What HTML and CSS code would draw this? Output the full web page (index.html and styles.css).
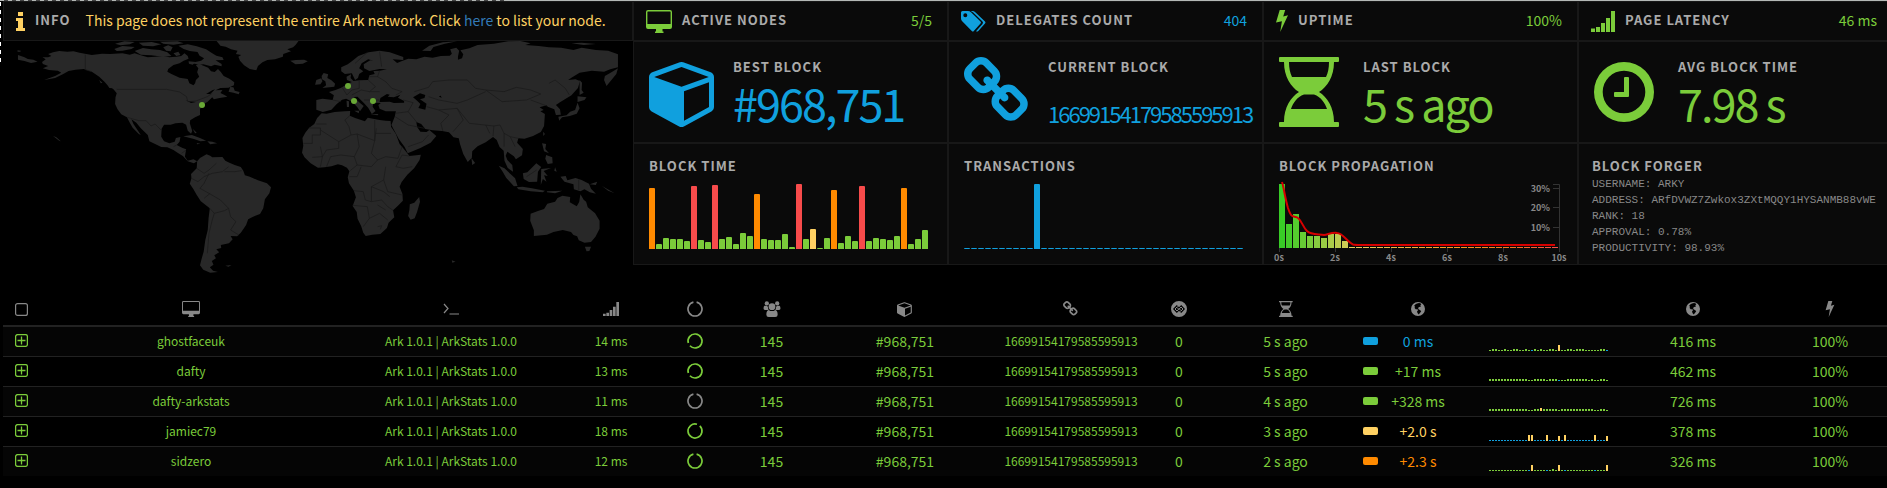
FILE: index.html
```html
<!DOCTYPE html>
<html lang="en">
<head>
<meta charset="utf-8">
<title>Ark Network Stats</title>
<link rel="stylesheet" href="styles.css">
</head>
<body>
<svg class="defs" aria-hidden="true">
  <symbol id="desktop" viewBox="0 0 26 23"><path fill-rule="evenodd" d="M2 0H24Q26 0 26 2V17Q26 19 24 19H16.5V21.5H17.5V23H9V21.5H10V19H2Q0 19 0 17V2Q0 0 2 0ZM2 1.5Q1.4 1.5 1.4 2V14H24.6V2Q24.6 1.5 24 1.5Z"/></symbol>
  <symbol id="tags" viewBox="0 0 25 21"><path fill-rule="evenodd" d="M1.5 0H7Q8.600 0 10 1.300L19.500 10.500Q20.500 11.500 19.500 12.500L12.800 20Q11.900 21 10.800 20L1.200 10.300Q0 9 0 7.500V1.500Q0 0 1.500 0ZM4.300 2.300A2 2 0 1 0 4.300 6.300A2 2 0 1 0 4.300 2.300Z"/><path d="M9.800 0H11.300Q13 0 14.300 1.300L24 10.500Q25 11.500 24 12.500L17.300 20Q16.200 21 15 20.200L21.500 12.900Q22.500 11.600 21.500 10.600L12.200 1.600Q11 .5 9.800 0Z"/></symbol>
  <symbol id="bolt" viewBox="0 0 12 22"><path d="M3.700 0H9.200L7.200 6.400L12 5.300L4.200 22L5.900 11.200L0 12.600Z"/></symbol>
  <symbol id="signal" viewBox="0 0 24 21"><path d="M0 17.500H4V21H0ZM5 16H9V21H5ZM10 12H14V21H10ZM15 7H19V21H15ZM20 0H24V21H20Z"/></symbol>
  <symbol id="info" viewBox="0 0 9 19"><path d="M2 0H7V4H2ZM0 6H7V16H9V19H0V16H2V9H0Z"/></symbol>
  <symbol id="cube" viewBox="0 0 1664 1792" preserveAspectRatio="xMinYMid"><path d="M896 1629l640-349v-636l-640 233v752zm-64-865l698-254-698-254-698 254zm832-252v768q0 35-18 65t-49 47l-704 384q-28 16-61 16t-61-16l-704-384q-31-17-49-47t-18-65v-768q0-40 23-73t61-47l704-256q22-8 44-8t44 8l704 256q38 14 61 47t23 73z"/></symbol>
  <symbol id="chain" viewBox="16 16 1632 1792" preserveAspectRatio="xMinYMid"><path d="M1456 1216q0-40-28-68l-208-208q-28-28-68-28-42 0-72 32 3 3 19 18.500t21.500 21.500 15 19 13 25.500 3.500 27.500q0 40-28 68t-68 28q-15 0-27.500-3.500t-25.500-13-19-15-21.500-21.500-18.500-19q-33 31-33 73 0 40 28 68l206 207q27 27 68 27 40 0 68-26l147-146q28-28 28-67zm-703-705q0-40-28-68l-206-207q-28-28-68-28-39 0-68 27l-147 146q-28 28-28 67 0 40 28 68l208 208q27 27 68 27 42 0 72-31-3-3-19-18.500t-21.500-21.500-15-19-13-25.500-3.500-27.500q0-40 28-68t68-28q15 0 27.500 3.500t25.500 13 19 15 21.500 21.500 18.500 19q33-31 33-73zm895 705q0 120-85 203l-147 146q-83 83-203 83-121 0-204-85l-206-207q-83-83-83-203 0-123 88-209l-88-88q-86 88-208 88-120 0-204-84l-208-208q-84-84-84-204t85-203l147-146q83-83 203-83 121 0 204 85l206 207q83 83 83 203 0 123-88 209l88 88q86-88 208-88 120 0 204 84l208 208q84 84 84 204z"/></symbol>
  <symbol id="hourglass" viewBox="0 0 60 70" preserveAspectRatio="xMinYMid"><path fill-rule="evenodd" d="M1 0H59Q60 0 60 1V4Q60 5 59 5H55C55 20 48 30 40 35C48 40 55 50 55 65H59Q60 65 60 66V69Q60 70 59 70H1Q0 70 0 69V66Q0 65 1 65H5C5 50 12 40 20 35C12 30 5 20 5 5H1Q0 5 0 4V1Q0 0 1 0ZM10 5C10 11 11 16 13 20H47C49 16 50 11 50 5ZM12 52H48C46 46 42 40 35 37.500H25C18 40 14 46 12 52Z"/></symbol>
  <symbol id="clock" viewBox="0 0 60 60"><path fill-rule="evenodd" d="M30 0A30 30 0 1 1 30 60A30 30 0 1 1 30 0ZM30 8.700A21.300 21.300 0 1 0 30 51.300A21.300 21.300 0 1 0 30 8.700Z"/><path d="M31 15H34Q35 15 35 16V34Q35 35 34 35H21Q20 35 20 34V31Q20 30 21 30H30V16Q30 15 31 15Z"/></symbol>
  <symbol id="box" viewBox="0 0 13 13"><rect x=".6" y=".6" width="11.800" height="11.800" rx="2" fill="none" stroke="currentColor" stroke-width="1.200"/></symbol>
  <symbol id="plusbox" viewBox="0 0 13 13"><path d="M6.500 2.500V10.500M2.500 6.500H10.500" stroke="currentColor" stroke-width="1.300"/><rect x=".6" y=".6" width="11.800" height="11.800" rx="2" fill="none" stroke="currentColor" stroke-width="1.300"/></symbol>
  <symbol id="terminal" viewBox="0 0 16 12"><path d="M1 1L5 5.500L1 10M6.500 11H16" fill="none" stroke="currentColor" stroke-width="1.200"/></symbol>
  <symbol id="ring" viewBox="0 0 16 16"><path d="M6.400 1.200A7 7 0 1 0 9.600 1.200" fill="none" stroke="currentColor" stroke-width="1.700"/></symbol>
  <symbol id="users" viewBox="0 0 18 17"><circle cx="3.500" cy="2.600" r="2.300"/><circle cx="14.500" cy="2.600" r="2.300"/><circle cx="9" cy="6" r="3.600"/><path d="M1 5H3.500Q5 6 4.800 7.500Q4.900 8.700 5.500 9.500H1.500Q0 9.500 0 8Q0 5.500 1 5ZM17 5H14.500Q13 6 13.200 7.500Q13.100 8.700 12.500 9.500H16.500Q18 9.500 18 8Q18 5.500 17 5ZM5.500 9.500Q9 12 12.500 9.500Q15 10 15 14.500Q15 17 12.500 17H5.500Q3 17 3 14.500Q3 10 5.500 9.500Z"/></symbol>
  <symbol id="uncles" viewBox="0 0 16 16"><path fill-rule="evenodd" d="M8 0A8 8 0 1 1 8 16A8 8 0 1 1 8 0ZM5.800 4L2 8L5.800 12L8 9.800L10.200 12L14 8L10.200 4L8 6.200Z"/><path d="M6.500 5.500L4 8L6 10L7.800 8L6.200 6.800M9.500 10.500L12 8L10 6L8.200 8L9.800 9.200" fill="none" stroke="currentColor"/></symbol>
  <symbol id="globe" viewBox="0 0 14 14"><path fill-rule="evenodd" d="M7 0A7 7 0 1 1 7 14A7 7 0 1 1 7 0ZM8 1L6 1.500L4.500 2.300L3 4L4 4.600L3.600 6L5 7.500L6.200 7L7 8.300L6 9.500L6.500 11L7.600 12.500L9 11L10.200 9.300L9 8L7.800 7.500L7 6L8.200 5L10 4.600L9.300 3.200L10.300 2.200L9.300 1.300Z"/></symbol>
</svg>

<header class="overview">
  <section class="left">
    <div class="cell stat yellow">
      <svg class="i-info"><use href="#info"/></svg>
      <h2>Info</h2>
      <p class="notice">This page does not represent the entire Ark network. Click <a href="#list">here</a> to list your node.</p>
    </div>
    <svg class="map" viewBox="0 0 630 244" role="img" aria-label="Node locations">
      <g class="land" transform="translate(-3 -41) scale(.40816 .33333)">
        <path d="M103 186L112 178 104 172 118 172 126 168 118 162 130 157 145 153 165 155 180 154 195 158 208 161 225 165 250 161 270 162 300 160 318 164 330 160 345 166 362 172 380 170 400 168 415 172 432 170 444 168 452 160 460 168 462 176 450 182 440 190 425 195 412 207 410 215 420 222 440 233 460 237 464 250 474 256 478 250 480 240 488 230 483 217 486 205 480 196 488 192 500 198 510 203 517 214 526 216 534 207 541 216 548 228 562 236 574 247 573 256 560 263 540 264 528 271 545 270 540 279 550 285 557 290 538 294 524 298 520 292 508 306 495 314 490 328 490 345 478 352 466 361 465 370 471 393 468 401 460 392 456 374 447 368 430 370 418 374 402 374 396 386 395 410 402 424 415 430 428 425 431 414 442 411 440 425 433 435 446 443 456 448 453 470 460 482 474 478 483 484 475 490 460 484 448 468 435 458 425 450 410 442 395 441 380 432 366 424 362 405 345 385 334 368 322 358 327 372 338 392 345 405 340 402 325 383 318 368 311 352 297 343 288 328 282 312 283 292 286 280 278 268 265 258 256 245 243 230 225 215 205 207 185 209 168 213 155 222 135 234 108 240 135 228 150 218 142 212 120 210 105 205 118 198 105 192ZM44 165L60 172 68 177 82 179 92 185 76 189 60 183 44 179ZM43 151L51 152 50 155 43 155ZM260 250L270 262 278 265 268 264ZM243 240L251 248 247 250Z"/>
        <path d="M280 147L300 138 330 141 322 147 300 152 286 153ZM330 153L350 144 370 148 392 150 410 157 420 168 400 170 370 166 345 164ZM282 131L305 124 330 126 318 133 295 136ZM340 128L372 126 395 133 375 139 350 137ZM400 142L412 136 423 142 418 154 407 152ZM425 160L437 155 442 165 432 168ZM392 125L435 124 450 130 425 134 400 131ZM437 137L460 133 482 139 505 148 518 158 530 167 545 172 548 180 528 181 543 192 543 199 526 194 517 199 498 193 487 195 470 188 493 182 500 175 489 167 484 156 465 153 450 147ZM462 184L480 186 472 194 463 191ZM530 122L732 122 724 135 718 142 704 148 713 154 694 162 693 170 674 178 655 180 643 187 632 198 628 211 612 207 598 196 588 182 584 170 591 165 578 162 582 152 566 148 553 140 540 137ZM711 182L725 180 745 179 754 184 742 191 724 193Z"/>
        <path d="M564 261L572 262 575 272 587 276 585 283 572 278 560 275ZM449 409L470 405 490 414 505 422 491 424 475 417ZM508 424L520 425 532 430 515 433ZM482 429L491 431 483 433ZM472 386L482 398 478 400ZM130 408L138 412 149 424 145 422Z"/>
        <path d="M483 484L490 474 506 463 515 467 520 472 545 471 552 482 562 488 575 495 590 501 596 512 600 526 612 530 632 541 654 550 664 562 660 580 649 598 645 625 637 642 620 650 608 658 603 675 590 698 581 709 565 708 570 718 561 730 541 735 542 744 530 748 537 757 525 766 529 775 519 783 523 794 514 802 522 812 534 816 515 818 498 809 490 796 494 776 499 755 503 720 509 690 511 655 514 625 492 604 482 585 474 568 465 551 469 535 468 522 482 505ZM552 797L567 795 560 800Z"/>
        <path d="M788 340L800 341 820 336 845 334 858 333 857 347 870 354 894 364 901 353 930 360 945 362 957 363 958 380 970 402 979 432 989 446 1000 463 1003 468 1031 464 1028 480 1015 504 998 524 984 546 979 560 986 582 987 602 975 617 963 631 966 652 952 668 948 684 932 702 912 704 896 708 890 698 885 679 876 656 874 636 864 618 872 592 867 572 855 550 852 532 856 514 850 503 838 496 828 493 812 499 795 502 779 503 761 490 746 472 740 458 743 437 741 414 748 398 757 384 770 372 777 354ZM1027 591L1029 605 1022 635 1016 655 1006 659 1000 648 1003 630 1004 613 1015 608Z"/>
        <path d="M775 300L790 296 815 300 818 286 806 276 822 270 836 263 850 253 862 246 850 240 849 230 860 223 859 234 866 243 880 241 902 240 905 226 918 222 915 213 930 212 948 208 930 207 905 213 892 205 891 193 907 181 915 182 902 178 886 190 880 205 890 214 880 222 877 234 870 240 862 220 845 222 836 214 836 202 852 193 862 184 878 168 903 157 930 152 955 157 988 171 988 180 962 178 973 189 985 183 1000 176 1020 178 1040 170 1060 173 1080 168 1102 167 1107 161 1103 148 1118 143 1125 152 1122 170 1122 179 1132 175 1135 163 1128 151 1150 145 1170 135 1210 131 1245 124 1275 123 1300 130 1287 135 1320 138 1345 142 1375 143 1405 150 1425 143 1460 150 1490 152 1514 163 1514 202 1495 208 1480 215 1450 212 1420 218 1400 233 1392 240 1410 238 1421 243 1416 264 1400 286 1384 298 1372 307 1362 315 1372 328 1374 344 1362 345 1358 328 1342 320 1339 316 1322 322 1332 330 1324 334 1335 342 1333 378 1325 396 1306 408 1285 416 1270 415 1267 428 1281 447 1279 466 1264 478 1259 469 1243 455 1239 467 1243 480 1255 495 1257 515 1244 504 1236 482 1234 452 1224 441 1217 420 1208 411 1190 427 1170 439 1157 454 1156 473 1146 486 1135 462 1127 432 1124 415 1111 412 1100 397 1083 393 1060 391 1042 387 1032 372 1020 366 1022 381 1030 395 1045 396 1052 390 1069 408 1055 428 1030 444 999 460 991 440 977 417 964 387 959 375 967 350 970 334 945 334 930 326 927 315 933 309 915 308 913 320 920 333 911 342 902 323 892 310 876 290 867 291 880 307 891 318 882 334 875 321 863 305 848 296 838 299 825 312 812 329 791 336 775 329Z"/>
        <path d="M793 219L804 223 802 234 812 241 821 251 819 260 790 264 799 256 797 244 789 238 788 228ZM775 240L787 235 790 244 785 253 772 254ZM849 302L855 304 855 321 850 321ZM868 332L880 332 879 340ZM907 343L927 342 925 346ZM1514 205L1510 222 1498 240 1486 258 1480 240 1482 228 1498 217ZM1034 152L1052 137 1085 127 1120 124 1090 131 1062 141 1055 153ZM1400 130L1425 128 1460 132 1430 135ZM1420 240L1426 248 1425 270 1430 278 1420 285ZM1415 289L1437 292 1432 300 1415 306ZM1415 308L1420 325 1413 341 1396 348 1377 352 1370 362 1368 350 1388 346 1397 335 1409 330ZM1155 474L1164 489 1157 495ZM1222 497L1236 505 1262 535 1268 558 1259 559 1240 533 1232 516ZM1266 562L1280 560 1303 565 1335 572 1330 577 1300 574 1270 568ZM1340 574L1378 572 1360 580 1340 577ZM1281 520L1292 517 1303 503 1314 490 1326 501 1318 515 1316 545 1296 546 1283 537ZM1326 507L1350 504 1332 513 1342 528 1333 526 1339 545 1330 537 1325 555ZM1360 502L1364 515 1358 512ZM1373 530L1386 528 1390 541 1410 534 1425 540 1443 551 1448 566 1460 581 1445 577 1432 568 1422 574 1406 568 1405 553 1383 545ZM1445 553L1463 545 1460 555ZM1475 558L1506 580 1490 572ZM1328 430L1338 432 1336 447 1345 460 1333 454ZM1338 465L1353 472 1354 490 1342 492 1336 476ZM1331 395L1335 402 1331 408Z"/>
        <path d="M1300 641L1318 633 1333 627 1341 611 1360 605 1366 594 1378 587 1397 591 1396 607 1413 619 1419 606 1422 583 1430 599 1436 605 1440 622 1458 640 1469 662 1469 686 1459 710 1448 726 1432 728 1418 721 1414 709 1405 705 1399 696 1379 690 1356 696 1340 704 1308 708 1308 691 1299 662ZM1433 740L1448 740 1444 753 1437 754ZM1107 781L1116 785 1108 788Z"/>
        <path class="water" d="M930 306L932 294 948 282 955 284 950 290 965 292 981 284 975 293 990 303 990 308 965 309 955 305ZM1012 292L1029 280 1042 285 1040 294 1029 298 1045 311 1042 329 1025 324 1030 312 1022 302ZM455 300L462 303 480 306 468 309ZM1075 289L1080 287 1082 294ZM515 282L527 268 520 271 505 282Z"/>
      </g>
      <g class="borders" transform="translate(-3 -41) scale(.40816 .33333)">
        <path d="M209 164V209L225 215M286 268H408L440 276 457 290 460 305 480 303 508 290 520 280M312 352L340 362H358L370 378 380 372 396 392M482 505L500 520 512 510 530 490M469 535L485 545 500 530 520 520 545 515 560 500M512 580L490 565 500 550 512 520M512 580L540 600 560 625 565 650 578 665 565 690M514 625L525 640 520 660 512 700 508 760M525 640L550 632 560 625M565 690L585 705M550 515L575 515 592 512M500 595L515 580M425 440L433 435M445 460L456 450"/>
        <path d="M775 372L800 372M757 384H785V405H765V430H743M785 390L830 425 860 405 855 380 845 360 857 347M860 405L875 402 918 422V360M918 422L922 385M830 425V445L800 450 790 470 765 472M785 440L790 470 785 500M875 402L880 440 868 470 835 465 810 470 800 500M868 470L875 495 858 512M918 422L910 460 925 480 945 470 975 475 985 440M958 400H920M1003 468L985 465 970 500 988 505 1010 500M875 495L910 500 925 480M856 530L875 530 885 500M867 572L890 575 895 600 910 605 910 560 940 540 945 500M864 616L900 620 905 655 890 680M940 540L950 575 985 585M910 605L935 600 950 620 963 631M905 655L930 640 950 660M910 560L940 575 955 590M925 615L945 630M925 680L935 677 932 688M815 300L835 305M838 262L850 285 862 270M880 241V265L862 270M902 240L920 260 905 275 885 270 862 285M930 212L925 230 945 245 960 265 985 275 970 285M905 275L930 275M925 230L905 230M892 300L930 300M900 157L870 190M930 155L935 200M988 300L1012 308 1000 335 968 340M1000 335L1022 368M1045 320L1075 330 1100 345 1080 370 1085 393M1015 275L1050 262 1060 245 1100 240 1145 240 1165 265 1190 270 1230 305 1290 300 1325 282 1300 270 1265 262 1235 275 1190 270M1050 290L1075 300 1120 310 1145 300 1190 275M1075 330L1120 325 1150 370 1210 378 1225 375 1235 400 1250 410 1270 415M1120 325L1135 360 1110 395M1235 400L1235 440M1250 410L1262 440M1210 378L1208 408M1190 375L1200 400M1300 300L1340 318M1345 250L1360 240 1385 265 1395 285M1418 538V570M1290 530L1315 510M968 350L1000 375 1040 385M1000 440L1035 425 1050 405"/>
      </g>
      <g class="nodes"><circle cx="199" cy="64" r="3"/><circle cx="345" cy="45" r="3"/><circle cx="351" cy="60" r="3"/><circle cx="370" cy="60" r="3"/></g>
    </svg>
  </section>

  <section class="stats">
    <div class="cell stat green"><svg class="i-desktop"><use href="#desktop"/></svg><h2>Active nodes</h2><span class="value">5/5</span></div>
    <div class="cell stat blue"><svg class="i-tags"><use href="#tags"/></svg><h2>Delegates count</h2><span class="value">404</span></div>
    <div class="cell stat green"><svg class="i-bolt"><use href="#bolt"/></svg><h2>Uptime</h2><span class="value">100%</span></div>
    <div class="cell stat green"><svg class="i-signal"><use href="#signal"/></svg><h2>Page latency</h2><span class="value">46 ms</span></div>

    <div class="cell big blue"><svg><use href="#cube"/></svg><div><h2>Best block</h2><p>#968,751</p></div></div>
    <div class="cell big blue"><svg><use href="#chain"/></svg><div><h2>Current block</h2><p class="long">16699154179585595913</p></div></div>
    <div class="cell big green"><svg><use href="#hourglass"/></svg><div><h2>Last block</h2><p>5 s ago</p></div></div>
    <div class="cell big green"><svg class="i-clock"><use href="#clock"/></svg><div><h2>Avg block time</h2><p>7.98 s</p></div></div>

    <div class="cell chart"><h2>Block time</h2><div class="bars" data-colors="ogggggrggrgggggogggggrgyggogggrgggggoggg" data-heights="61,5,11,10,10,8,63,9,7,64,10,12,5,16,13,55,10,9,9,15,2,65,10,20,1,11,59,6,13,8,63,8,11,10,9,13,61,5,10,19"></div></div>
    <div class="cell chart"><h2>Transactions</h2><div class="bars" data-colors="bbbbbbbbbbbbbbbbbbbbbbbbbbbbbbbbbbbbbbbb" data-heights="1,1,1,1,1,1,1,1,1,1,65,1,1,1,1,1,1,1,1,1,1,1,1,1,1,1,1,1,1,1,1,1,1,1,1,1,1,1,1,1"></div></div>
    <div class="cell chart"><h2>Block propagation</h2>
      <svg class="propagation" viewBox="0 0 300 84" role="img" aria-label="Block propagation histogram">
        <g>
          <rect x="8" y="4" width="6" height="64" fill="#38cc26"/><rect x="15" y="44" width="6" height="24" fill="#44cc2a"/><rect x="22" y="34" width="6" height="34" fill="#55cc2e"/><rect x="29" y="52" width="6" height="16" fill="#66cc34"/><rect x="36" y="56" width="6" height="12" fill="#78cc3a"/><rect x="43" y="56" width="6" height="12" fill="#88cc40"/><rect x="50" y="58" width="6" height="10" fill="#9acc44"/><rect x="57" y="54" width="6" height="14" fill="#accc4a"/><rect x="64" y="54" width="6" height="14" fill="#bccc50"/><rect x="71" y="61" width="6" height="7" fill="#cccc56"/>
        </g>
        <linearGradient id="tail" gradientUnits="userSpaceOnUse" x1="78" y1="0" x2="288" y2="0"><stop offset="0" stop-color="#e8d060"/><stop offset=".5" stop-color="#ff9a20"/><stop offset=".75" stop-color="#f47a1c"/><stop offset="1" stop-color="#f74b4b"/></linearGradient>
        <path d="M78 67.500H288" stroke="url(#tail)" stroke-dasharray="6 1" fill="none"/>
        <path class="axis" d="M282 4.500H288.500V68M282 8.500H288M282 27.500H288M282 47.500H288M8.500 68V72M64.500 68V72M120.500 68V72M176.500 68V72M232.500 68V72M288.500 68V72"/>
        <path class="curve" d="M11 2C13 8 14 18 17 28C20 37 21 36 25 37C30 38 31 46 36 51C40 55 47 54 53 55C58 54 62 52 66 53C72 53 76 62 82 64.500C84 65 86 65 90 65H284"/>
        <g class="ylabels"><text x="279" y="12">30%</text><text x="279" y="31">20%</text><text x="279" y="51">10%</text></g>
        <g class="xlabels"><text x="8" y="81">0s</text><text x="64" y="81">2s</text><text x="120" y="81">4s</text><text x="176" y="81">6s</text><text x="232" y="81">8s</text><text x="288" y="81">10s</text></g>
      </svg>
    </div>
    <div class="cell chart forger-cell"><h2>Block forger</h2>
      <ul class="forger"><li>USERNAME: ARKY</li><li>ADDRESS: ARfDVWZ7Zwkox3ZXtMQQY1HYSANMB88vWE</li><li>RANK: 18</li><li>APPROVAL: 0.78%</li><li>PRODUCTIVITY: 98.93%</li></ul>
    </div>
  </section>
</header>

<table class="nodes-table">
  <colgroup><col class="c-pin"><col class="c-name"><col class="c-type"><col class="c-latency"><col class="c-mining"><col class="c-peers"><col class="c-block"><col class="c-hash"><col class="c-uncles"><col class="c-last"><col class="c-mark"><col class="c-prop"><col class="c-hist"><col class="c-avg"><col class="c-up"></colgroup>
  <thead><tr>
    <th><button type="button" aria-label="Pin all"><svg class="s13"><use href="#box"/></svg></button></th>
    <th><svg class="s18"><use href="#desktop"/></svg></th>
    <th><svg class="s16"><use href="#terminal"/></svg></th>
    <th><svg class="s16"><use href="#signal"/></svg></th>
    <th><svg class="s16"><use href="#ring"/></svg></th>
    <th><svg class="s18"><use href="#users"/></svg></th>
    <th><svg class="s16"><use href="#cube"/></svg></th>
    <th><svg class="s16"><use href="#chain"/></svg></th>
    <th><svg class="s16"><use href="#uncles"/></svg></th>
    <th><svg class="s14 tall"><use href="#hourglass"/></svg></th>
    <th></th>
    <th><svg class="s14"><use href="#globe"/></svg></th>
    <th></th>
    <th><svg class="s14"><use href="#globe"/></svg></th>
    <th><svg class="s16"><use href="#bolt"/></svg></th>
  </tr></thead>
  <tbody>
    <tr><td><button type="button" aria-label="Pin ghostfaceuk"><svg class="s13"><use href="#plusbox"/></svg></button></td><td class="small">ghostfaceuk</td><td class="small">Ark 1.0.1 | ArkStats 1.0.0</td><td class="small">14 ms</td><td><svg class="s16 on turn-left"><use href="#ring"/></svg></td><td>145</td><td>#968,751</td><td class="small">16699154179585595913</td><td>0</td><td>5 s ago</td><td><span class="mark bg-blue"></span></td><td class="blue">0 ms</td><td><div class="spark" data-colors="ggggggggggggggbggggggggygggggggggggggggb" data-heights="1,2,2,1,1,2,1,1,2,2,1,1,2,1,1,2,1,2,1,1,2,2,1,6,1,1,2,2,1,2,2,2,1,1,1,1,1,2,2,1"></div></td><td>416 ms</td><td>100%</td></tr>
    <tr><td><button type="button" aria-label="Pin dafty"><svg class="s13"><use href="#plusbox"/></svg></button></td><td class="small">dafty</td><td class="small">Ark 1.0.1 | ArkStats 1.0.0</td><td class="small">13 ms</td><td><svg class="s16 on turn-left"><use href="#ring"/></svg></td><td>145</td><td>#968,751</td><td class="small">16699154179585595913</td><td>0</td><td>5 s ago</td><td><span class="mark bg-green"></span></td><td>+17 ms</td><td><div class="spark" data-colors="gggggggggggggggggggggggbgggggggggggggggg" data-heights="2,2,2,2,2,2,2,2,2,2,2,2,2,1,1,2,2,2,2,1,2,2,2,1,1,1,2,2,2,2,2,2,2,1,2,1,1,2,2,1"></div></td><td>462 ms</td><td>100%</td></tr>
    <tr><td><button type="button" aria-label="Pin dafty-arkstats"><svg class="s13"><use href="#plusbox"/></svg></button></td><td class="small">dafty-arkstats</td><td class="small">Ark 1.0.1 | ArkStats 1.0.0</td><td class="small">11 ms</td><td class="gray"><svg class="s16"><use href="#ring"/></svg></td><td>145</td><td>#968,751</td><td class="small">16699154179585595913</td><td>0</td><td>4 s ago</td><td><span class="mark bg-green"></span></td><td>+328 ms</td><td><div class="spark" data-colors="gggggggggggggggggygggggggggggggggggggggg" data-heights="2,2,2,2,2,2,2,2,2,2,2,2,2,1,1,2,2,3,2,2,2,2,2,1,2,2,2,2,2,2,2,2,2,2,2,1,1,2,2,1"></div></td><td>726 ms</td><td>100%</td></tr>
    <tr><td><button type="button" aria-label="Pin jamiec79"><svg class="s13"><use href="#plusbox"/></svg></button></td><td class="small">jamiec79</td><td class="small">Ark 1.0.1 | ArkStats 1.0.0</td><td class="small">18 ms</td><td><svg class="s16 on turn-right"><use href="#ring"/></svg></td><td>145</td><td>#968,751</td><td class="small">16699154179585595913</td><td>0</td><td>3 s ago</td><td><span class="mark bg-yellow"></span></td><td class="yellow">+2.0 s</td><td><div class="spark" data-colors="bbbbbbbbbbbbbyybbbbybbbybybbbbbbbbbybbby" data-heights="1,1,1,1,1,1,1,1,1,1,1,1,1,6,6,1,1,1,1,6,1,1,1,5,1,6,1,1,1,1,1,1,1,1,1,6,1,1,1,5"></div></td><td>378 ms</td><td>100%</td></tr>
    <tr><td><button type="button" aria-label="Pin sidzero"><svg class="s13"><use href="#plusbox"/></svg></button></td><td class="small">sidzero</td><td class="small">Ark 1.0.1 | ArkStats 1.0.0</td><td class="small">12 ms</td><td><svg class="s16 on"><use href="#ring"/></svg></td><td>145</td><td>#968,751</td><td class="small">16699154179585595913</td><td>0</td><td>2 s ago</td><td><span class="mark bg-orange"></span></td><td class="orange">+2.3 s</td><td><div class="spark" data-colors="gggggggggggggbyggggbgggygbgggggggggbgggy" data-heights="1,1,1,1,1,1,1,1,1,1,1,1,1,1,6,1,1,1,1,1,1,2,1,6,1,1,1,1,1,1,1,1,1,1,1,1,1,1,1,6"></div></td><td>326 ms</td><td>100%</td></tr>
  </tbody>
</table>
<script src="script.js"></script>
</body>
</html>
```

FILE: styles.css
```css
* { box-sizing: border-box; }

html { overflow-x: hidden; background: #000; }

body {
  position: relative;
  margin: 0;
  padding: 1px 0 12px 3px;
  overflow-x: hidden;
  background: #000;
  color: #aaa;
  font: 14px/20px "Noto Sans CJK SC", "Open Sans", sans-serif;
}

/* thin line along the top edge, dashed over its first stretch */
body::before {
  content: "";
  position: absolute;
  inset: 0 0 auto 0;
  height: 1px;
  background: linear-gradient(90deg, transparent 508px, #b4b8b6 508px),
    repeating-linear-gradient(90deg, #b4b8b6 0 4px, #444 4px 8px);
}
body::after {
  content: "";
  position: absolute;
  left: 0;
  top: 2px;
  width: 1px;
  height: 60px;
  background: repeating-linear-gradient(180deg, #fff 0 4px, #000 4px 8px);
}

h2, p, ul { margin: 0; padding: 0; }
svg { display: block; fill: currentColor; }
.defs { display: none; }

h2 {
  color: #aaa;
  font-size: 13px;
  line-height: 20px;
  font-weight: 700;
  letter-spacing: 1px;
  text-transform: uppercase;
  white-space: nowrap;
}

.green { color: #7bcc3a; }
.blue { color: #10a0de; }
.yellow { color: #ffd162; }
.orange { color: #ff8a00; }
.gray { color: #888; }

.overview {
  display: grid;
  grid-template-columns: 1fr 2fr;
  align-items: start;
  margin-right: -6px;
}
.left { min-width: 0; }
.map { width: 100%; height: auto; }
.land { fill: #282828; }
.land .water { fill: #000; }
.borders { fill: none; stroke: #1a1a1a; stroke-width: 2; }
.map .nodes { fill: #69a836; }

.stats { display: grid; grid-template-columns: repeat(4, 1fr); }

.cell { min-width: 0; border: 1px solid #181818; background: #0a0a0a; }

.stat {
  display: flex;
  align-items: center;
  gap: 10px;
  height: 40px;
  padding: 0 15px 2px 12px;
}
.stat svg { flex: none; margin-top: 2px; }
.value { margin-left: auto; }
.notice { margin-left: 5px; white-space: nowrap; }
.notice a { color: #337ab7; text-decoration: none; }
.i-info { width: 9px; height: 19px; }
.i-desktop { width: 26px; height: 23px; }
.i-tags { width: 25px; height: 21px; }
.i-bolt { width: 12px; height: 22px; }
.i-signal { width: 24px; height: 21px; }

.big { display: flex; gap: 14px; height: 102px; padding: 15px 0 0 15px; }
.big svg { flex: none; width: 70px; height: 70px; }
.big .i-clock { width: 60px; height: 60px; margin: 5px 10px 5px 0; }
.big p {
  margin-top: 1px;
  font-size: 45px;
  line-height: 50px;
  letter-spacing: -2px;
  white-space: nowrap;
}
.big .long { padding-top: 10px; font-size: 22px; }

.chart { height: 122px; padding: 12px 15px 0; }
.bars { display: flex; align-items: flex-end; gap: 1px; height: 65px; margin-top: 8px; }
.bar { width: 6px; border-radius: 1px 1px 0 0; }
.b { background: #10a0de; }
.g { background: #7bcc3a; }
.y { background: #ffd162; }
.o { background: #ff8a00; }
.r { background: #f74b4b; }

.propagation { width: 300px; height: 84px; margin: 4px 0 0 -8px; }
.propagation text { fill: #888; font-size: 9px; font-weight: 700; }
.ylabels { text-anchor: end; }
.xlabels { text-anchor: middle; }
.axis { fill: none; stroke: #333; }
.curve { fill: none; stroke: #d60000; stroke-width: 2; }

.forger-cell { padding-left: 13px; }
.forger {
  list-style: none;
  color: #888;
  font: 11px/16px "Liberation Mono", monospace;
  white-space: nowrap;
}

.nodes-table {
  width: calc(100% + 6px);
  table-layout: fixed;
  border-collapse: separate;
  border-spacing: 0;
  color: #7bcc3a;
  text-align: center;
}
.nodes-table th { height: 42px; padding: 8px 0 0; border-bottom: 2px solid #222; color: #888; }
.nodes-table td { height: 30px; padding: 0 0 2px; border-bottom: 1px solid #222; white-space: nowrap; }
.nodes-table tr:nth-child(odd) td { background: #050505; }
.nodes-table tr:last-child td { border-bottom-color: #000; }
.nodes-table svg { margin: 0 auto; }
.nodes-table .small { font-size: 12px; }
.nodes-table button { display: block; margin: 0 auto; padding: 0; border: 0; background: none; color: inherit; }

.c-pin { width: 37px; }
.c-name { width: 302px; }
.c-type { width: 218px; }
.c-latency { width: 102px; }
.c-mining { width: 65px; }
.c-peers { width: 89px; }
.c-block { width: 178px; }
.c-hash { width: 154px; }
.c-uncles { width: 62px; }
.c-last { width: 151px; }
.c-mark { width: 19px; }
.c-prop { width: 76px; }
.c-hist { width: 163px; }
.c-avg { width: 148px; }
.c-up { width: 126px; }

.s13 { width: 13px; height: 13px; }
.s14 { width: 14px; height: 14px; }
.s16 { width: 16px; height: 16px; }
.s18 { width: 18px; height: 16px; }
.tall { height: 16px; }
.on { stroke-width: 2px; }
.turn-left { transform: rotate(-120deg); }
.turn-right { transform: rotate(30deg); }

.mark { display: block; width: 15px; height: 8px; margin: 0 auto; border-radius: 2px; }
.bg-blue { background: #10a0de; }
.bg-green { background: #7bcc3a; }
.bg-yellow { background: #ffd162; }
.bg-orange { background: #ff8a00; }

.spark { display: flex; align-items: flex-end; gap: 1px; height: 20px; margin-left: 33px; }
.spark .bar { width: 2px; border-radius: 0; }
```

FILE: script.js
```js
// Builds the bar charts from their data attributes.
document.querySelectorAll("[data-heights]").forEach(function (chart) {
  var colors = chart.dataset.colors;
  chart.dataset.heights.split(",").forEach(function (height, i) {
    var bar = document.createElement("span");
    bar.className = "bar " + colors[i];
    bar.style.height = height + "px";
    chart.appendChild(bar);
  });
});
```
